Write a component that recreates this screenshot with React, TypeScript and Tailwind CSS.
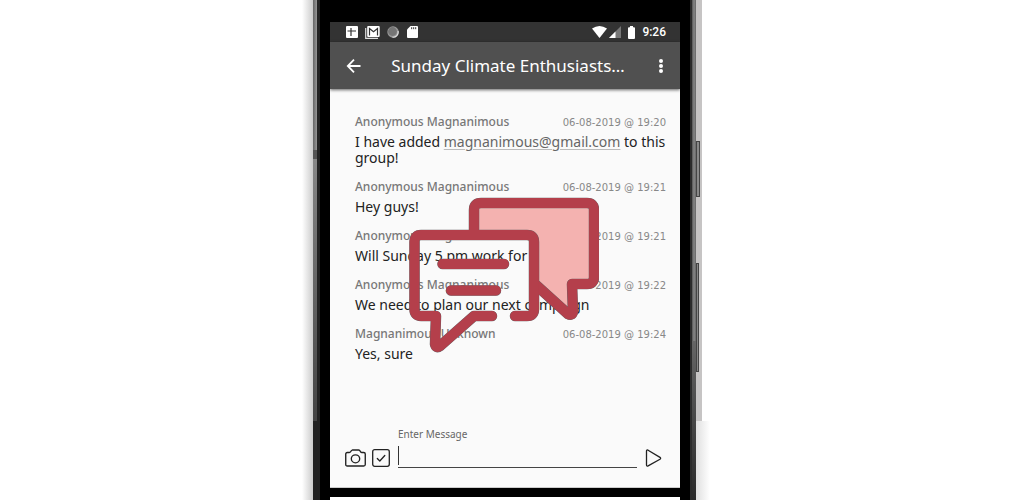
import React from "react";

type Message = { author: string; time: string; body: React.ReactNode };

const messages: Message[] = [
  {
    author: "Anonymous Magnanimous",
    time: "06-08-2019 @ 19:20",
    body: (
      <>
        I have added{" "}
        <a href="mailto:magnanimous@gmail.com" className="text-[#666] underline decoration-[#bbb] underline-offset-2">
          magnanimous@gmail.com
        </a>{" "}
        to this group!
      </>
    ),
  },
  { author: "Anonymous Magnanimous", time: "06-08-2019 @ 19:21", body: "Hey guys!" },
  { author: "Anonymous Magnanimous", time: "06-08-2019 @ 19:21", body: "Will Sunday 5 pm work for" },
  { author: "Anonymous Magnanimous", time: "06-08-2019 @ 19:22", body: "We need to plan our next campaign" },
  { author: "Magnanimous Unknown", time: "06-08-2019 @ 19:24", body: "Yes, sure" },
];

function StatusBar() {
  return (
    <div className="flex h-5 items-center justify-between bg-[#333] pr-[14px] pl-4 text-white">
      <div className="flex items-center gap-[7px]">
        <svg width="12" height="12" viewBox="0 0 12 12" aria-hidden="true">
          <rect width="12" height="12" rx="1" fill="#fff" />
          <path d="M5 2v8M1.500 5H10" stroke="#333" strokeWidth="1.200" />
        </svg>
        <svg width="15" height="13" viewBox="0 0 15 13" aria-hidden="true">
          <path d="M.7 2v10.300H13" fill="none" stroke="#ddd" strokeWidth="1.200" />
          <rect x="2.200" width="12.500" height="11" rx="1" fill="#fff" />
          <path d="M4.500 9.500V2.500l4 3.300 4-3.300v7" fill="none" stroke="#333" strokeWidth="1.200" />
        </svg>
        <svg width="12" height="12" viewBox="0 0 12 12" aria-hidden="true">
          <circle cx="6" cy="6" r="5.700" fill="#999" />
          <circle cx="5.500" cy="5.500" r="4.400" fill="#757575" />
          <path d="M11 5a5 5 0 0 1-5.500 6.200" fill="none" stroke="#ddd" strokeWidth="1.200" />
        </svg>
        <svg className="ml-px" width="11" height="12" viewBox="0 0 11 12" aria-hidden="true">
          <path d="M3.500 0H10q1 0 1 1v10q0 1-1 1H1q-1 0-1-1V3.500Z" fill="#fff" />
          <path d="M4.700 1.200v2M6.700 1.200v2M8.700 1.200v2" stroke="#333" strokeWidth="1" />
        </svg>
      </div>
      <div className="flex items-center">
        <svg width="15" height="12" viewBox="0 0 15 12" aria-hidden="true">
          <path d="M0 2.500Q7.500-2.500 15 2.500L7.500 12Z" fill="#fff" />
        </svg>
        <svg className="ml-0.5" width="12" height="12" viewBox="0 0 12 12" aria-hidden="true">
          <path d="M0 12 12 0v12Z" fill="#777" />
          <path d="M0 12 6.500 5.500V12Z" fill="#fff" />
        </svg>
        <svg className="ml-[7px]" width="7" height="13" viewBox="0 0 7 13" aria-hidden="true">
          <path d="M2 0h3v1.300h1q1 0 1 1V12q0 1-1 1H1q-1 0-1-1V2.300q0-1 1-1h1Z" fill="#fff" />
        </svg>
        <span className="ml-[7px] font-['Roboto',sans-serif] text-[12px] font-medium">9:26</span>
      </div>
    </div>
  );
}

function AppBar() {
  return (
    <header className="relative z-10 flex h-[47px] items-center bg-[#505050] pr-3 pl-4 text-white shadow-[0_1px_3px_rgba(0,0,0,0.6)]">
      <button type="button" aria-label="Back">
        <svg width="16" height="16" viewBox="0 0 16 16" fill="none" stroke="currentColor" strokeWidth="1.800" aria-hidden="true">
          <path d="M14.500 8H2M8 1.700 1.800 8 8 14.300" />
        </svg>
      </button>
      <h1 className="min-w-0 flex-1 text-center text-[17px] whitespace-nowrap">Sunday Climate Enthusiasts…</h1>
      <button type="button" aria-label="More options">
        <svg width="14" height="16" viewBox="0 0 14 16" fill="currentColor" aria-hidden="true">
          <circle cx="7" cy="3" r="2" />
          <circle cx="7" cy="8" r="2" />
          <circle cx="7" cy="13" r="2" />
        </svg>
      </button>
    </header>
  );
}

const backBubble = "M65 37V13Q65 6 72 6H178Q185 6 185 13V80Q185 87 178 87H163L164 115Q163 119 159 117L127 88";
const frontBubble =
  "M106 119H118Q125 119 125 112V45Q125 38 118 38H12Q5.500 38 5.500 45V112Q5.500 119 12 119H27L26 147Q27 152 31 149L65 119H83";
const textLines = "M33.500 67H95M42 93.500H87";

function ChatBubbles() {
  return (
    <svg
      className="pointer-events-none absolute top-[108px] left-[79px]"
      width="190"
      height="156"
      viewBox="0 0 190 156"
      fill="none"
      strokeLinecap="round"
      strokeLinejoin="round"
      aria-hidden="true"
    >
      <path d="M65 38V13Q65 6 72 6H178Q185 6 185 13V80Q185 87 178 87H163V115Q163 120 158 117L125 87V45Q125 38 118 38Z" fill="#f4b2b0" />
      <g stroke="#686064" strokeWidth="10.500">
        <path d={backBubble} />
        <path d={frontBubble} />
        <path d={textLines} />
      </g>
      <g stroke="#b43f4b" strokeWidth="9.800">
        <path d={backBubble} />
        <path d={frontBubble} />
        <path d={textLines} />
      </g>
    </svg>
  );
}

function Composer() {
  return (
    <form className="flex items-end pr-[18px] pb-[19px] pl-[15px]" onSubmit={(e) => e.preventDefault()}>
      <button type="button" aria-label="Take photo" className="pb-px">
        <svg width="21" height="18" viewBox="0 0 20 18" fill="none" stroke="#222" strokeWidth="1.300" strokeLinejoin="round" preserveAspectRatio="none" aria-hidden="true">
          <path d="M2.200 3.500H4Q5 3.500 5.500 2.500T7 1h6q1 0 1.500 1.300T16 3.500h1.800Q19.300 3.500 19.300 5v10.500q0 1.500-1.500 1.500H2.200Q.7 17 .7 15.500V5Q.7 3.500 2.200 3.500Z" />
          <circle cx="10" cy="9.800" r="4" />
        </svg>
      </button>
      <button type="button" aria-label="Create poll" className="ml-1.5 pb-px">
        <svg width="18" height="18" viewBox="0 0 18 18" fill="none" stroke="#222" strokeWidth="1.300" strokeLinecap="round" strokeLinejoin="round" aria-hidden="true">
          <rect x=".7" y=".7" width="16.600" height="16.600" rx="2" />
          <path d="m5.300 9.500 2.500 2.500 5-5.500" />
        </svg>
      </button>
      <div className="ml-2 flex min-w-0 flex-1 flex-col">
        <label htmlFor="message" className="text-[10px] leading-4 text-[#666]">
          Enter Message
        </label>
        <div className="mt-1 flex h-[22px] items-start border-b border-[#444]">
          <span className="h-[19px] w-px bg-[#333]" />
          <input id="message" type="text" className="h-5 min-w-0 flex-1 bg-transparent text-[14px] outline-none" />
        </div>
      </div>
      <button type="submit" aria-label="Send" className="ml-2 pb-px">
        <svg width="17" height="18" viewBox="0 0 17 18" fill="none" stroke="#222" strokeWidth="1.300" strokeLinejoin="round" aria-hidden="true">
          <path d="M1.500 2v14q.2 1.500 1.600.9L15 10.200q1.300-.9 0-1.800L3.100 1.200Q1.600.5 1.500 2Z" />
        </svg>
      </button>
    </form>
  );
}

export default function App() {
  return (
    <main className="flex min-h-screen justify-center overflow-hidden bg-white pr-3 font-['Noto_Sans',sans-serif]">
      <div className="w-[11px] bg-linear-to-r from-white to-[#ccc]" />
      <div className="flex w-1 flex-col">
        <div className="h-[150px] bg-linear-to-r from-[#666] to-[#999]" />
        <div className="h-[9px] bg-[#555]" />
        <div className="h-[262px] bg-linear-to-b from-[#888] to-[#444]" />
        <div className="flex-1 bg-[#222]" />
      </div>
      <div className="w-[3px] bg-[#222]" />
      <div className="w-[10px] bg-black" />
      <div className="flex w-[350px] max-w-full flex-col">
        <div className="h-[22px] bg-black" />
        <StatusBar />
        <AppBar />
        <section className="relative flex flex-1 flex-col justify-between border-b border-[#ccc] bg-[#fafafa]">
          <ul className="flex flex-col gap-[11px] pt-[23px] pr-[14px] pl-[25px]">
            {messages.map((m, i) => (
              <li key={i}>
                <div className="flex h-5 items-center justify-between">
                  <strong className="text-[12px] font-medium text-[#777]">{m.author}</strong>
                  <time className="font-['DejaVu_Sans',sans-serif] text-[10px] text-[#888]">{m.time}</time>
                </div>
                <p className="mt-0.5 text-[14px] leading-4 text-[#222]">{m.body}</p>
              </li>
            ))}
          </ul>
          <ChatBubbles />
          <Composer />
        </section>
        <div className="h-[9px] bg-black" />
        <div className="h-[3px] bg-white" />
      </div>
      <div className="w-[10px] bg-black" />
      <div className="w-[2px] bg-[#2b2b2b]" />
      <div className="flex w-1 flex-col">
        <div className="h-[341px] bg-linear-to-r from-[#555] via-[#888] to-[#666]" />
        <div className="flex-1 bg-linear-to-b from-[#666] to-[#2a2a2a]" />
      </div>
      <div className="flex w-[14px] flex-col">
        <div className="h-[141px] w-[6px] bg-[#c6c4c4]" />
        <div className="h-[56px] w-1 border border-[#444] bg-[#888] shadow-[2px_0_0_#c6c4c4]" />
        <div className="h-[66px] w-[6px] bg-[#c6c4c4]" />
        <div className="h-[109px] w-[3px] border border-[#444] bg-[#888] shadow-[3px_0_0_#c6c4c4]" />
        <div className="h-[49px] w-[6px] bg-[#c6c4c4]" />
        <div className="flex-1 bg-linear-to-r from-[#e0e0e0] to-white" />
      </div>
    </main>
  );
}
